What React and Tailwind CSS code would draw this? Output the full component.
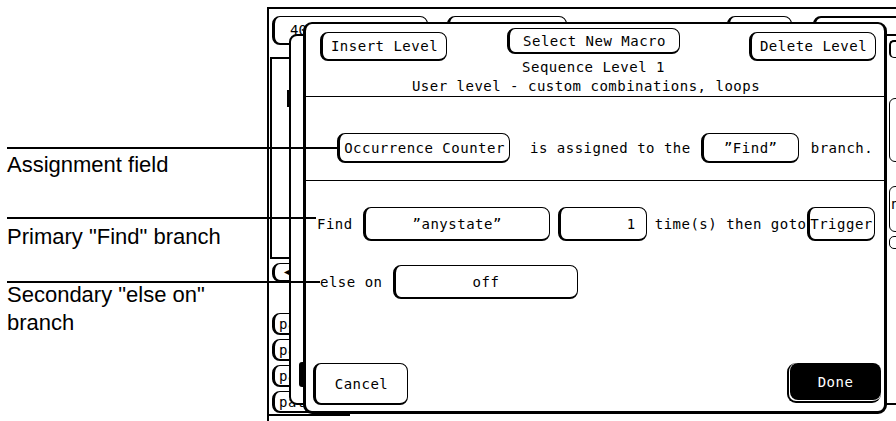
import clsx from 'clsx'

const mono = "font-['DejaVu_Sans_Mono',monospace] text-[14px] tracking-[0.5px] leading-none text-black whitespace-nowrap"

function Key({ className, dark, children }) {
  return (
    <div
      className={clsx(
        'flex shrink-0 items-center justify-center rounded-[8px] border border-b-2 border-l-[3px] border-black',
        dark ? 'bg-black text-white' : 'bg-white',
        className
      )}
    >
      {children}
    </div>
  )
}

function Callout({ top, width }) {
  return <div className="absolute left-[7px] z-20 h-[2px] bg-black" style={{ top, width }} />
}

export default function App() {
  return (
    <div className="relative flex h-[421px] w-[896px] overflow-hidden bg-white">
      {/* captions */}
      <div className="w-[267px] shrink-0 pl-[7px] pt-[151px] font-['Liberation_Sans',Arial,sans-serif] text-[22px] leading-[28px] text-black">
        <p>Assignment field</p>
        <p className="mt-[44px]">Primary "Find" branch</p>
        <p className="mt-[30px]">
          Secondary "else on"
          <br />
          branch
        </p>
      </div>

      {/* analyzer screen */}
      <div className={clsx('relative mt-[7px] flex flex-1 flex-col border-l-2 border-t-2 border-black', mono)}>
        <div className="flex pl-[3px] pt-[7px]">
          <Key className="h-[29px] w-[156px] justify-start pl-[15px] tracking-normal">400 ns/div</Key>
          <Key className="ml-[19px] h-[29px] w-[120px]">Acquire</Key>
          <Key className="ml-[160px] h-[29px] w-[65px]">Run</Key>
          <Key className="ml-[21px] h-[29px] w-[100px] border-t-2">Trace</Key>
        </div>

        <div className="mt-[12px] ml-px h-[202px] w-[40px] border-2 border-black pl-[15px] pt-[31px]">
          <div className="h-[17px] w-[4px] bg-black" />
        </div>
        <Key className="ml-[3px] mt-[4px] h-[19px] w-[40px] justify-start pl-[9px] text-[10px]">◀</Key>
        <div className="ml-[3px] mt-[31px] flex flex-col gap-[4px]">
          <Key className="h-[22px] w-[60px] justify-start pl-[4px]">pattern</Key>
          <Key className="h-[22px] w-[60px] justify-start pl-[4px]">pattern</Key>
          <Key className="h-[22px] w-[60px] justify-start pl-[4px]">pattern</Key>
          <Key className="h-[22px] w-[60px] justify-start pl-[4px]">pattern</Key>
        </div>
        <div className="mt-px h-[2px] w-[81px] bg-black" />

        {/* window behind */}
        <div className="absolute left-[20px] top-[25px] flex h-[371px] w-[640px] rounded-[8px] border-2 border-black bg-white">
          <div className="flex flex-col justify-end">
            <div className="mb-[16px] ml-[8px] h-[25px] w-[4px] rounded-l-[3px] bg-black" />
          </div>
          <div className="flex-1" />
          <div className="flex w-[38px] flex-col">
            <div className="mt-[4px] h-[18px] rounded-l-[5px] border-b border-l-2 border-t-2 border-black" />
            <div className="mt-[40px] h-[64px] rounded-l-[6px] border border-black" />
            <div className="mt-[24px] h-[46px] rounded-l-[6px] border border-black pl-[1px] pt-[10px]">n</div>
            <div className="mt-[4px] h-[13px] rounded-l-[5px] border border-black" />
          </div>
        </div>

        {/* sequence level dialog */}
        <div className="absolute left-[34px] top-[13px] z-10 flex h-[392px] w-[584px] flex-col rounded-[9px] border-x-[3px] border-b-[3px] border-t-2 border-black bg-white">
          <div className="flex h-[73px] shrink-0 border-b border-black">
            <Key className="ml-[14px] mt-[8px] h-[29px] w-[127px]">Insert Level</Key>
            <div className="flex min-w-0 flex-1 flex-col items-center pr-[9px] pt-[4px]">
              <Key className="h-[26px] w-[173px]">Select New Macro</Key>
              <p className="mt-[3px] leading-[20px]">Sequence Level 1</p>
              <p className="mr-[15px] leading-[19px]">User level - custom combinations, loops</p>
            </div>
            <Key className="mr-[8px] mt-[8px] h-[29px] w-[127px]">Delete Level</Key>
          </div>

          <div className="h-[84px] shrink-0 border-b border-black pl-[31px] pt-[36px]">
            <div className="flex h-[30px] items-center">
              <Key className="h-[30px] w-[173px]">Occurrence Counter</Key>
              <span className="ml-[20px]">is assigned to the</span>
              <Key className="ml-[10px] h-[30px] w-[98px]">”Find”</Key>
              <span className="ml-[12px]">branch.</span>
            </div>
          </div>

          <div className="flex flex-1 flex-col">
            <div className="mt-[26px] flex h-[34px] items-center pl-[11px]">
              <span>Find</span>
              <Key className="ml-[10px] h-[34px] w-[187px]">”anystate”</Key>
              <Key className="ml-[8px] h-[34px] w-[89px] justify-end pr-[10px]">1</Key>
              <span className="ml-[8px]">time(s) then goto</span>
              <Key className="h-[34px] w-[68px]">Trigger</Key>
            </div>
            <div className="mt-[24px] flex h-[34px] items-center pl-[14px]">
              <span>else on</span>
              <Key className="ml-[10px] h-[34px] w-[185px]">off</Key>
            </div>
            <div className="mt-auto flex items-end justify-between pb-[6px] pl-[7px] pr-[3px]">
              <Key className="h-[42px] w-[95px]">Cancel</Key>
              <div className="mb-[2px] rounded-[9px] border-b-2 border-l-2 border-black">
                <div className="mb-px ml-px flex h-[37px] w-[91px] items-center justify-center rounded-[8px] bg-black text-white">
                  Done
                </div>
              </div>
            </div>
          </div>
        </div>
      </div>

      <Callout top={147} width={330} />
      <Callout top={217} width={309} />
      <Callout top={281} width={313} />
    </div>
  )
}
